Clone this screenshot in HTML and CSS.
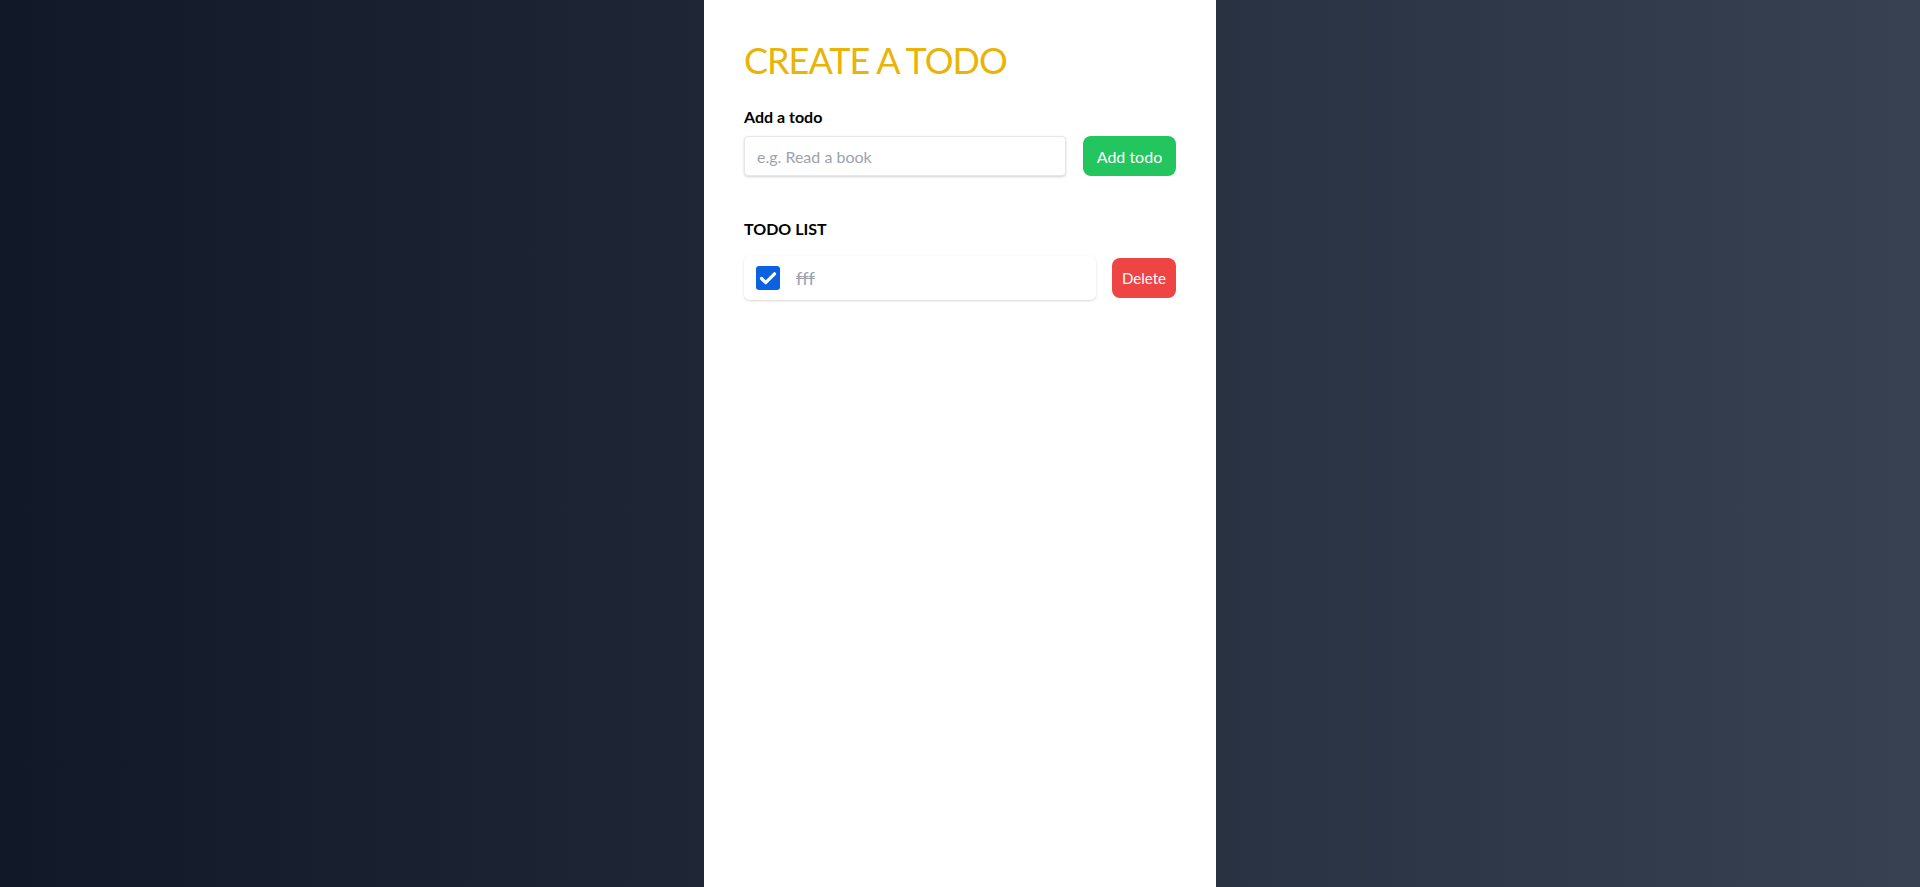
FILE: index.html
```html
<!DOCTYPE html>
<html lang="en">
<head>
<meta charset="utf-8">
<title>Todo</title>
<link rel="stylesheet" href="styles.css">
</head>
<body>
<div class="page">
  <main class="card">
    <h1 class="title">CREATE A TODO</h1>
    <form class="add-form">
      <label class="label" for="todo">Add a todo</label>
      <div class="add-row">
        <input id="todo" class="input" type="text" placeholder="e.g. Read a book">
        <button type="button" class="btn btn-green">Add todo</button>
      </div>
    </form>
    <section class="list">
      <h2 class="list-title">TODO LIST</h2>
      <ul class="items">
        <li class="item">
          <div class="item-box">
            <span class="check">
              <svg viewBox="0 0 24 24" width="24" height="24"><rect x="0" y="0" width="24" height="24" rx="3" fill="#0b61e0"/><path d="M5.5 12.5l4.2 4.2L18.5 7.8" fill="none" stroke="#fff" stroke-width="3.2" stroke-linecap="round" stroke-linejoin="round"/></svg>
            </span>
            <span class="item-text">fff</span>
          </div>
          <button type="button" class="btn btn-red">Delete</button>
        </li>
      </ul>
    </section>
  </main>
</div>
</body>
</html>
```
FILE: styles.css
```css
* { box-sizing: border-box; }
html, body { margin: 0; padding: 0; }
body {
  font-family: "Segoe UI", Lato, "Noto Sans", sans-serif;
  color: #000;
}
.page {
  min-height: 100vh;
  background: linear-gradient(to right, #111827, #374151);
  display: flex;
  justify-content: center;
}
.card {
  width: 512px;
  min-height: 100vh;
  background: #fff;
  padding: 40px;
}
.title {
  margin: 0 0 24px;
  font-size: 36px;
  line-height: 40px;
  font-weight: 400;
  letter-spacing: -1px;
  color: #eab308;
}
.add-form { margin: 0; }
.label {
  display: block;
  font-size: 16px;
  line-height: 24px;
  font-weight: 700;
  margin-bottom: 8px;
  padding-top: 1px;
  height: 24px;
}
.add-row {
  display: flex;
  gap: 17px;
}
.input {
  flex: 1;
  height: 40px;
  border: 1px solid #e5e7eb;
  border-radius: 4px;
  padding: 0 12px;
  font-family: inherit;
  font-size: 16px;
  color: #111827;
  box-shadow: 0 1px 3px rgba(0,0,0,0.12), 0 1px 2px rgba(0,0,0,0.06);
  outline: none;
}
.input::placeholder { color: #9ca3af; }
.btn {
  border: none;
  border-radius: 8px;
  height: 40px;
  font-family: inherit;
  font-size: 16px;
  color: #fff;
  cursor: pointer;
}
.btn-green {
  width: 93px;
  background: #22c55e;
}
.btn-red {
  width: 64px;
  background: #ef4444;
  font-size: 15px;
}
.list { margin-top: 40px; }
.list-title {
  margin: 0 0 16px;
  font-size: 16px;
  line-height: 24px;
  font-weight: 700;
  padding-top: 1px;
  height: 24px;
}
.items {
  list-style: none;
  margin: 0;
  padding: 0;
}
.item {
  display: flex;
  align-items: center;
  gap: 16px;
}
.item-box {
  flex: 1;
  height: 44px;
  display: flex;
  align-items: center;
  gap: 16px;
  padding: 0 12px;
  background: #fff;
  border-radius: 6px;
  box-shadow: 0 1px 3px rgba(0,0,0,0.1), 0 1px 2px rgba(0,0,0,0.06);
}
.check {
  display: flex;
  width: 24px;
  height: 24px;
}
.item-text {
  font-size: 18px;
  color: #9ca3af;
  text-decoration: line-through;
  font-variant-ligatures: none;
}
```
